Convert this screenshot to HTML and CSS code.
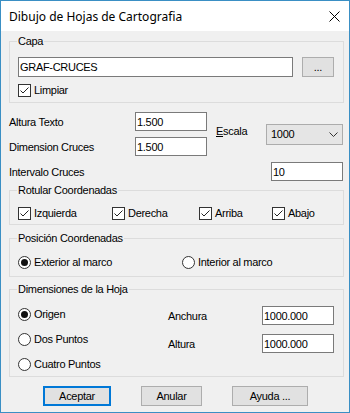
FILE: index.html
```html
<!DOCTYPE html>
<html lang="es">
<head>
  <meta charset="UTF-8">
  <title>Dibujo de Hojas de Cartografia</title>
  <link rel="stylesheet" href="styles.css">
</head>
<body>

  <div class="window">
    <div class="titlebar">
      <span class="title">Dibujo de Hojas de Cartografia</span>
      <svg class="close" width="11" height="11" viewBox="0 0 11 11">
        <path d="M0.5 0.5L10.5 10.5M10.5 0.5L0.5 10.5" stroke="#000" stroke-width="1" fill="none"/>
      </svg>
    </div>

    <div class="content">
      <fieldset class="group capa">
        <legend>Capa</legend>
        <div class="layer-row">
          <input type="text" class="field layer" value="GRAF-CRUCES">
          <button class="btn browse">...</button>
        </div>
        <label class="check limpiar">
          <span class="box"><svg width="11" height="11" viewBox="0 0 11 11"><path d="M1.5 5.5L4 8L9.5 2.5" stroke="#222" fill="none"/></svg></span>
          Limpiar
        </label>
      </fieldset>

      <div class="params">
        <div class="params-top">
          <div class="param-grid">
            <span>Altura Texto</span>
            <input type="text" class="field num" value="1.500">
            <span>Dimension Cruces</span>
            <input type="text" class="field num" value="1.500">
          </div>
          <span class="escala"><u>E</u>scala</span>
          <div class="combo">
            <span>1000</span>
            <svg width="9" height="5" viewBox="0 0 9 5"><path d="M0.5 0.5L4.5 4.5L8.5 0.5" stroke="#333" fill="none"/></svg>
          </div>
        </div>
        <div class="param-row">
          <span>Intervalo Cruces</span>
          <input type="text" class="field num" value="10">
        </div>
      </div>

      <fieldset class="group rotular">
        <legend>Rotular Coordenadas</legend>
        <div class="check-row">
          <label class="check w94">
            <span class="box"><svg width="11" height="11" viewBox="0 0 11 11"><path d="M1.5 5.5L4 8L9.5 2.5" stroke="#222" fill="none"/></svg></span>
            Izquierda
          </label>
          <label class="check w87">
            <span class="box"><svg width="11" height="11" viewBox="0 0 11 11"><path d="M1.5 5.5L4 8L9.5 2.5" stroke="#222" fill="none"/></svg></span>
            Derecha
          </label>
          <label class="check w73">
            <span class="box"><svg width="11" height="11" viewBox="0 0 11 11"><path d="M1.5 5.5L4 8L9.5 2.5" stroke="#222" fill="none"/></svg></span>
            Arriba
          </label>
          <label class="check">
            <span class="box"><svg width="11" height="11" viewBox="0 0 11 11"><path d="M1.5 5.5L4 8L9.5 2.5" stroke="#222" fill="none"/></svg></span>
            Abajo
          </label>
        </div>
      </fieldset>

      <fieldset class="group posicion">
        <legend>Posición Coordenadas</legend>
        <div class="check-row">
          <label class="radio w164">
            <svg width="13" height="13" viewBox="0 0 13 13"><circle cx="6.5" cy="6.5" r="6" fill="#fff" stroke="#333"/><circle cx="6.5" cy="6.5" r="3.5" fill="#111"/></svg>
            Exterior al marco
          </label>
          <label class="radio">
            <svg width="13" height="13" viewBox="0 0 13 13"><circle cx="6.5" cy="6.5" r="6" fill="#fff" stroke="#333"/></svg>
            Interior al marco
          </label>
        </div>
      </fieldset>

      <fieldset class="group dimensiones">
        <legend>Dimensiones de la Hoja</legend>
        <div class="dim-body">
          <div class="radio-list">
            <label class="radio">
              <svg width="13" height="13" viewBox="0 0 13 13"><circle cx="6.5" cy="6.5" r="6" fill="#fff" stroke="#333"/><circle cx="6.5" cy="6.5" r="3.5" fill="#111"/></svg>
              Origen
            </label>
            <label class="radio">
              <svg width="13" height="13" viewBox="0 0 13 13"><circle cx="6.5" cy="6.5" r="6" fill="#fff" stroke="#333"/></svg>
              Dos Puntos
            </label>
            <label class="radio">
              <svg width="13" height="13" viewBox="0 0 13 13"><circle cx="6.5" cy="6.5" r="6" fill="#fff" stroke="#333"/></svg>
              Cuatro Puntos
            </label>
          </div>
          <div class="size-grid">
            <span>Anchura</span>
            <input type="text" class="field num" value="1000.000">
            <span>Altura</span>
            <input type="text" class="field num" value="1000.000">
          </div>
        </div>
      </fieldset>

      <div class="buttons">
        <button class="btn default w68">Aceptar</button>
        <button class="btn w61">Anular</button>
        <button class="btn w76">Ayuda ...</button>
      </div>
    </div>
  </div>

</body>
</html>
```

FILE: styles.css
```css
* {
  box-sizing: border-box;
}
body {
  margin: 0;
  font-family: "Liberation Sans", Arial, sans-serif;
  font-size: 11px;
  letter-spacing: -0.3px;
  color: #000;
}
.window {
  width: 350px;
  height: 413px;
  border: 1px solid #3a8fc4;
  background-color: #f0f0f0;
}
.titlebar {
  height: 30px;
  background-color: #fff;
  display: flex;
  align-items: center;
  justify-content: space-between;
  padding: 0 9px 0 8px;
}
.title {
  font-family: "Noto Sans", sans-serif;
  font-size: 12px;
  letter-spacing: 0;
}
.content {
  padding: 4px 5px 0 8px;
}
.group {
  margin: 0;
  padding: 0 8px;
  border: 1px solid #dcdcdc;
  min-width: 0;
}
.group legend {
  padding: 0 1px;
  margin-left: -1px;
  line-height: 13px;
}
.field {
  font-family: inherit;
  font-size: 11px;
  letter-spacing: inherit;
  color: #000;
  background-color: #fff;
  border: 1px solid #7a7a7a;
  padding: 0 1px;
  margin: 0;
  height: 19px;
  outline: none;
}
.btn {
  font-family: inherit;
  font-size: 11px;
  letter-spacing: inherit;
  color: #000;
  background-color: #e1e1e1;
  border: 1px solid #adadad;
  padding: 0;
  margin: 0;
  height: 20px;
}
.btn.default {
  border: 2px solid #0078d7;
}
.check, .radio {
  display: flex;
  align-items: center;
  gap: 3px;
  height: 13px;
  line-height: 13px;
}
.box {
  width: 13px;
  height: 13px;
  border: 1px solid #333;
  background-color: #fff;
  display: flex;
}
.radio svg {
  flex: none;
}

/* Capa */
.capa {
  padding-top: 9px;
  padding-bottom: 5px;
}
.layer-row {
  display: flex;
  gap: 9px;
}
.field.layer {
  width: 275px;
  height: 20px;
}
.btn.browse {
  width: 32px;
}
.limpiar {
  margin-top: 7px;
}

/* parametros */
.params {
  margin: 9px 1px 0 0;
}
.params-top {
  display: flex;
  align-items: center;
}
.param-grid {
  display: grid;
  grid-template-columns: 126px 72px;
  grid-auto-rows: 19px;
  row-gap: 6px;
  align-items: center;
}
.escala {
  width: 50px;
  margin-left: 9px;
  padding-bottom: 7px;
}
.combo {
  width: 77px;
  height: 21px;
  background-color: #e5e5e5;
  border: 1px solid #acacac;
  display: flex;
  align-items: center;
  justify-content: space-between;
  padding: 0 4px 0 4px;
}
.param-row {
  display: flex;
  align-items: center;
  justify-content: space-between;
  margin-top: 6px;
}
.field.num {
  width: 72px;
}

/* Rotular / Posicion */
.rotular {
  margin-top: 3px;
  padding-top: 10px;
  padding-bottom: 4px;
}
.check-row {
  display: flex;
}
.w94 { width: 94px; }
.w87 { width: 87px; }
.w73 { width: 73px; }
.w164 { width: 164px; }
.posicion {
  margin-top: 7px;
  padding-top: 11px;
  padding-bottom: 7px;
}

/* Dimensiones */
.dimensiones {
  margin-top: 6px;
  padding-top: 10px;
  padding-bottom: 5px;
}
.dim-body {
  display: flex;
}
.radio-list {
  width: 150px;
  padding-top: 2px;
  display: flex;
  flex-direction: column;
  gap: 12px;
}
.size-grid {
  display: grid;
  grid-template-columns: 94px 72px;
  grid-auto-rows: 19px;
  row-gap: 9px;
  align-items: center;
  align-self: flex-start;
}

/* botones */
.buttons {
  display: flex;
  gap: 30px;
  margin: 9px 0 0 34px;
}
.w68 { width: 68px; }
.w61 { width: 61px; }
.w76 { width: 76px; }
```
